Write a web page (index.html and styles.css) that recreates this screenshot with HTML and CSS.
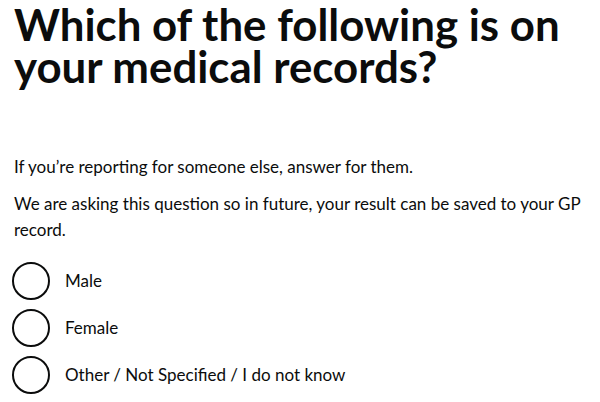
FILE: index.html
```html
<!DOCTYPE html>
<html lang="en">
<head>
  <meta charset="UTF-8">
  <meta name="viewport" content="width=device-width, initial-scale=1.0">
  <title>Which of the following is on your medical records?</title>
  <link rel="stylesheet" href="styles.css">
</head>
<body>

<main class="page">
  <form class="question">
    <fieldset class="fieldset">
      <legend class="fieldset-legend">
        <h1 class="heading-xl">Which of the following is on your medical records?</h1>
      </legend>

      <p class="body-text">If you’re reporting for someone else, answer for them.</p>
      <p class="body-text">We are asking this question so in future, your result can be saved to your GP record.</p>

      <div class="radios">
        <div class="radios-item">
          <input class="radios-input" id="sex-male" name="sex" type="radio" value="male">
          <label class="radios-label" for="sex-male">Male</label>
        </div>
        <div class="radios-item">
          <input class="radios-input" id="sex-female" name="sex" type="radio" value="female">
          <label class="radios-label" for="sex-female">Female</label>
        </div>
        <div class="radios-item">
          <input class="radios-input" id="sex-other" name="sex" type="radio" value="other">
          <label class="radios-label" for="sex-other">Other / Not Specified / I do not know</label>
        </div>
      </div>
    </fieldset>
  </form>
</main>

</body>
</html>
```
FILE: styles.css
```css
/* General styles */
body {
  margin: 0;
  font-family: Lato, "Liberation Sans", Arial, sans-serif;
  color: #0b0c0c;
  background: #fff;
}

.page {
  padding: 3px 6px 0 14px;
}

/* Question */
.fieldset {
  margin: 0;
  padding: 0;
  border: none;
  min-width: 0;
}

.fieldset-legend {
  padding: 0;
}

.heading-xl {
  margin: 0 0 67px;
  font-size: 43.8px;
  line-height: 42px;
  font-weight: 700;
}

.body-text {
  margin: 0 0 11px;
  font-size: 17px;
  line-height: 26px;
}

/* Radios */
.radios {
  display: flex;
  flex-direction: column;
  gap: 9px;
  margin-top: 19px;
}

.radios-item {
  display: flex;
  align-items: center;
  min-height: 38px;
  margin-left: -2px;
}

.radios-input {
  appearance: none;
  -webkit-appearance: none;
  flex: none;
  width: 38px;
  height: 38px;
  margin: 0;
  border: 2px solid #0b0c0c;
  border-radius: 50%;
  background: #fff;
}

.radios-input:checked {
  background: radial-gradient(circle, #0b0c0c 0 9px, #fff 10px);
}

.radios-label {
  padding-left: 15px;
  font-size: 17px;
  line-height: 26px;
}
```
